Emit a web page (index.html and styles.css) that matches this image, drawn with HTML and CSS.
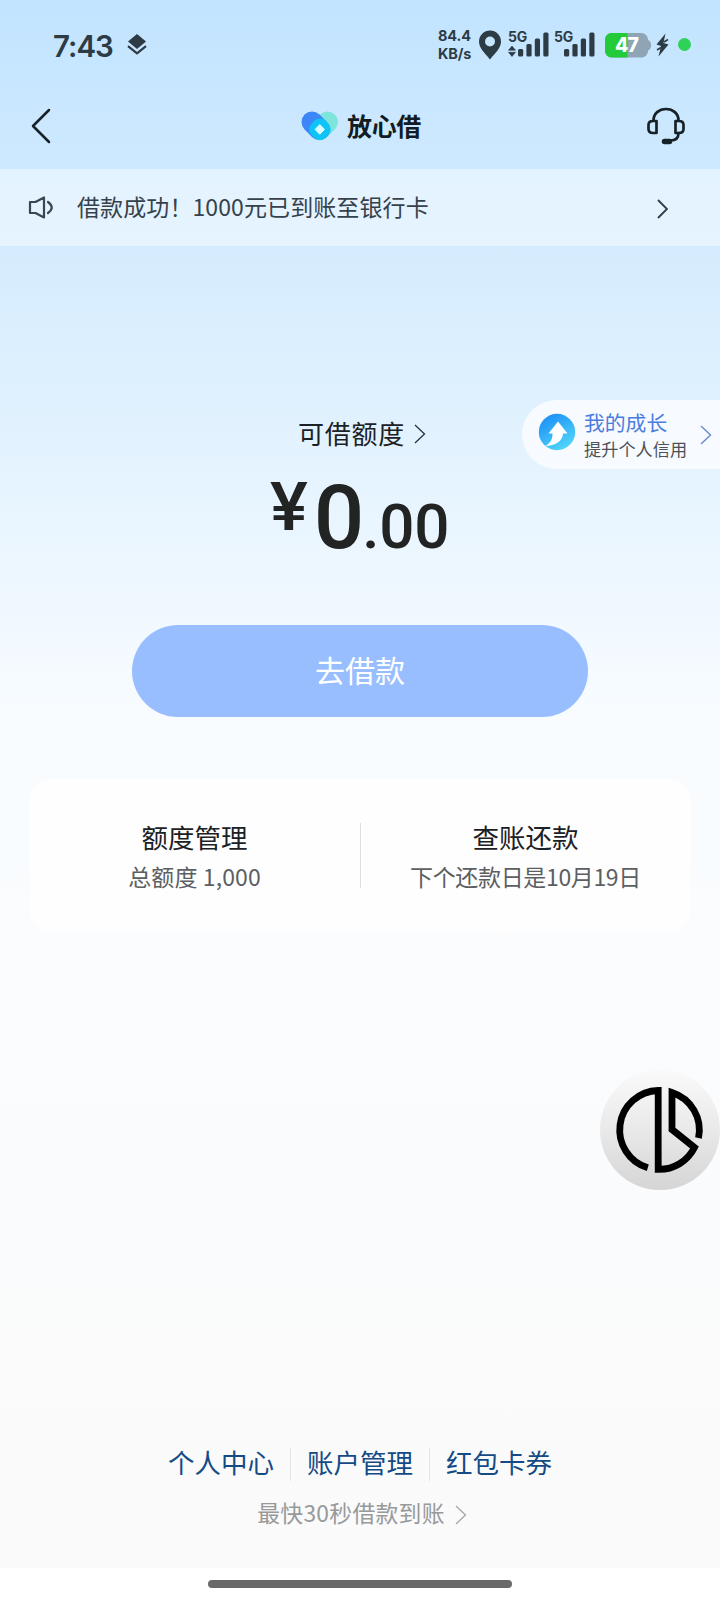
FILE: index.html
```html
<!DOCTYPE html>
<html lang="zh-CN">
<head>
<meta charset="utf-8">
<title>放心借</title>
<link rel="stylesheet" href="styles.css">
</head>
<body>
<div class="page">
  <div class="status">
    <span class="time">7:43</span>
    <svg class="layers" width="20" height="22" viewBox="0 0 20 22"><path d="M10 0 19 7.500 10 15 1 7.500Z" fill="#2d3b45"/><path d="M1 12.200 10 19.300l9-7.100" fill="none" stroke="#2d3b45" stroke-width="2.200"/></svg>
    <div class="speed"><span>84.4</span><span>KB/s</span></div>
    <svg class="pin" width="24" height="30" viewBox="0 0 24 30"><path fill-rule="evenodd" d="M12 .5A11 11 0 0 0 1 11.500C1 18 6 22 12 29.500 18 22 23 18 23 11.500A11 11 0 0 0 12 .5ZM12 6.500a5 5 0 1 1 0 10 5 5 0 0 1 0-10Z" fill="#2d3b45"/></svg>
    <svg class="signal" width="42" height="28" viewBox="0 0 42 28" fill="#2d3b45"><text x="0" y="11" class="net">5G</text><path d="m4 15 3.500 4.200H.5ZM4 25.500l3.500-4.200H.5Z" stroke="#2d3b45" stroke-width=".6" stroke-linejoin="round"/><rect x="10" y="18" width="5.200" height="7.500" rx="1.500"/><rect x="18.400" y="13" width="5.200" height="12.500" rx="1.500"/><rect x="26.800" y="7.500" width="5.200" height="18" rx="1.500"/><rect x="35.300" y="1.500" width="5.200" height="24" rx="1.500"/></svg>
    <svg class="signal second" width="42" height="28" viewBox="0 0 42 28" fill="#2d3b45"><text x="0" y="11" class="net">5G</text><rect x="10" y="18" width="5.200" height="7.500" rx="1.500"/><rect x="18.400" y="13" width="5.200" height="12.500" rx="1.500"/><rect x="26.800" y="7.500" width="5.200" height="18" rx="1.500"/><rect x="35.300" y="1.500" width="5.200" height="24" rx="1.500"/></svg>
    <svg class="battery" width="46" height="25" viewBox="0 0 46 25"><rect width="43" height="24.500" rx="6.500" fill="#8fa4b5"/><path d="M43 7q3 1 3 5.200t-3 5.200Z" fill="#8fa4b5"/><path d="M6.500 0H22.500V24.500H6.500A6.500 6.500 0 0 1 0 18V6.500A6.500 6.500 0 0 1 6.500 0Z" fill="#24cb39"/><text x="21.500" y="19.300" text-anchor="middle" class="charge">47</text></svg>
    <svg class="bolt" width="13" height="24" viewBox="0 0 13 24"><path d="M9.500.5.5 11.500 5 13 2.500 23.500 12.500 11.500 7.500 10Z" fill="#2d3b45"/><path d="m1 17 4-2.500M12 6.500 8 9" stroke="#2d3b45" stroke-width="1.500"/></svg>
    <span class="dot"></span>
  </div>

  <header class="header">
    <svg class="back" width="20" height="36" viewBox="0 0 20 36"><path d="M18 2 2 18 18 34" fill="none" stroke="#182229" stroke-width="2.500" stroke-linecap="round" stroke-linejoin="round"/></svg>
    <div class="brand">
      <svg width="38" height="30" viewBox="0 0 38 30"><g stroke-linecap="round" stroke-width="21" fill="none"><path d="M26.500 11 18.500 18.500" stroke="#7ee5dc"/><path d="M11 11 18.500 18.500" stroke="#3d86f8"/></g><rect x="8.900" y="8.300" width="20" height="20" rx="8" transform="rotate(45 18.900 18.300)" fill="#0ec3f7"/><path d="m18.800 13.500 4.700 4.900-4.700 4.900-4.700-4.900Z" fill="#d9fbff" stroke="#d9fbff" stroke-linejoin="round"/></svg>
      <span>放心借</span>
    </div>
    <svg class="service" width="40" height="38" viewBox="0 0 40 38" fill="none" stroke="#172128" stroke-width="2.700" stroke-linecap="round" stroke-linejoin="round"><path d="M7.500 13.500C7.500 6.500 13 2 20 2s12.500 4.500 12.500 11.500M10.500 14v12H7Q2.500 26 2.500 22v-4Q2.500 14 7 14ZM29.500 14v12H33q4.500 0 4.500-4v-4q0-4-4.500-4Z"/><path d="M32.500 26c0 5-3 7.500-8 7.500"/><path d="M18.500 34.500h5" stroke-width="5.500"/></svg>
  </header>

  <div class="notice">
    <svg width="26" height="24" viewBox="0 0 26 24" fill="none" stroke="#3a4652" stroke-width="2.200" stroke-linecap="round" stroke-linejoin="round"><path d="M2 6H7.500L16 1.500V21.500L7.500 17H2ZM20 6Q27.500 11.500 20 17"/></svg>
    <span class="notice-text">借款成功！1000元已到账至银行卡</span>
    <svg class="notice-more" width="12" height="20" viewBox="0 0 12 20"><path d="m2 1 9 9-9 9" fill="none" stroke="#333d45" stroke-width="1.900"/></svg>
  </div>

  <main class="main">
    <div class="growth">
      <svg width="38" height="38" viewBox="0 0 38 38"><defs><linearGradient id="growth-blue" x1="0" y1="0" x2=".6" y2="1"><stop stop-color="#1687f5"/><stop offset="1" stop-color="#4fd3fa"/></linearGradient></defs><circle cx="19" cy="19" r="18.200" fill="url(#growth-blue)"/><path d="M20 8.500 29.500 20.500H25C25 28 17 33 7.500 33 13 29.500 14.500 26 14.500 20.500H10.500Z" fill="#fff"/></svg>
      <div class="growth-copy"><b>我的成长</b><span>提升个人信用</span></div>
      <svg class="growth-more" width="12" height="20" viewBox="0 0 12 20"><path d="m1 1 9.500 9L1 19" fill="none" stroke="#6e8ed0" stroke-width="1.500"/></svg>
    </div>
    <div class="quota"><span>可借额度</span><svg width="12" height="20" viewBox="0 0 12 20"><path d="m1 1 9.500 9L1 19" fill="none" stroke="#26343d" stroke-width="1.300"/></svg></div>
    <div class="amount"><span class="yen">¥</span><span class="whole">0</span><span class="cents">.00</span></div>
    <button class="borrow">去借款</button>
    <section class="card">
      <div class="cell"><b>额度管理</b><span>总额度 1,000</span></div>
      <div class="cell"><b>查账还款</b><span class="due">下个还款日是10月19日</span></div>
    </section>
  </main>

  <svg class="float" width="120" height="120" viewBox="0 0 120 120"><defs><linearGradient id="ball" x1="0" y1="0" x2="0" y2="1"><stop stop-color="#fafafa"/><stop offset=".5" stop-color="#e9e9ea"/><stop offset="1" stop-color="#d5d5d6"/></linearGradient></defs><circle cx="60" cy="60" r="60" fill="url(#ball)"/><g fill="none" stroke="#000" stroke-width="6.800"><path d="M47.800 97.800A39.500 39.500 0 0 1 58.200 20.500V99.400A39.500 39.500 0 0 0 94.500 77.500L72 59.500V22.400A39.500 39.500 0 0 1 98.500 68"/></g></svg>

  <footer class="footer">
    <nav class="links"><a>个人中心</a><a>账户管理</a><a>红包卡券</a></nav>
    <div class="tip"><span>最快30秒借款到账</span><svg width="12" height="20" viewBox="0 0 12 20"><path d="m1 1 9.500 9L1 19" fill="none" stroke="#a5a8aa" stroke-width="1.300"/></svg></div>
  </footer>
  <div class="gesture"><span></span></div>
</div>
</body>
</html>
```
FILE: styles.css
```css
* { box-sizing: border-box; }
body { margin: 0; font-family: "Noto Sans CJK SC", sans-serif; color: #1b2125; }
svg { display: block; flex: none; }
b { font-weight: 400; }
.page {
  position: relative; display: flex; flex-direction: column; width: 720px; height: 1600px; overflow: hidden; white-space: nowrap;
  background: linear-gradient(#c2e4ff 0, #cee9ff 165px, #d5ecfe 246px, #dff1fe 400px, #edf7ff 570px, #f8fcff 720px, #fafcfe 940px, #fafafa 1568px);
}
.status { display: flex; height: 88px; padding-left: 53px; align-items: flex-start; color: #2d3b45; }
.time { width: 61px; margin-top: 28px; font: 600 29.5px/36px Inter, sans-serif; letter-spacing: -1px; }
.layers { margin: 34px 0 0 13px; }
.speed { display: flex; flex-direction: column; width: 34px; margin: 27px 0 0 291px; font: 700 14.5px/17.5px Inter, sans-serif; letter-spacing: -.1px; }
.pin { margin: 30px 0 0 6px; }
.signal { margin: 31px 0 0 6px; overflow: visible; }
.second { margin-left: 4px; }
.net { font: 700 14px Inter, sans-serif; letter-spacing: -.2px; }
.battery { margin: 33px 0 0 9px; }
.charge { font: 800 19.5px Inter, sans-serif; letter-spacing: -1px; fill: #fff; }
.bolt { margin: 33px 0 0 5px; }
.dot { width: 13px; height: 13px; margin: 38px 0 0 9px; border-radius: 50%; background: #30d158; }

.header { display: flex; height: 81px; padding: 0 34px 5px 31px; align-items: center; justify-content: space-between; }
.brand { display: flex; align-items: center; gap: 8px; margin-left: 25px; font-size: 25px; line-height: 34px; font-weight: 700; color: #111c24; }
.brand span { margin-top: -3px; letter-spacing: -.3px; }

.notice { display: flex; height: 77px; padding: 0 52px 0 28px; align-items: center; background: rgba(255,255,255,.42); color: #36424b; }
.notice-text { flex: 1; margin: -3px 0 0 23px; font-size: 23px; line-height: 34px; letter-spacing: .1px; }
.notice-more { margin-top: 2px; }

.main { position: relative; display: flex; flex-direction: column; align-items: center; padding-top: 168px; }
.growth { position: absolute; right: 0; top: 154px; display: flex; width: 198px; height: 69px; padding: 11px 8px 0 16px; align-items: flex-start; border-radius: 35px 0 0 35px; background: rgba(250,252,255,.86); }
.growth svg:first-child { margin-top: 2px; }
.growth-copy { display: flex; flex: 1; flex-direction: column; margin-left: 8px; }
.growth-copy b { font-size: 20.8px; line-height: 22px; color: #4b7ddf; }
.growth-copy span { margin-top: 3px; font-size: 17.2px; line-height: 25px; color: #4c5157; }
.growth-more { margin-top: 14px; }
.quota { display: flex; align-items: center; gap: 9px; height: 38px; margin-left: 4px; font-size: 26px; letter-spacing: .7px; }
.quota span { margin-top: -2px; }
.quota svg { margin-top: 2px; }
.amount { display: flex; align-items: baseline; height: 110px; margin: 11px 0 0 -1px; color: #222323; font-family: Roboto, sans-serif; font-weight: 500; line-height: 110px; }
.yen { width: 38px; transform: translateY(-18px) scaleX(1.08); transform-origin: left; font-size: 66px; }
.whole { margin-left: 6px; font-size: 89px; }
.cents { margin-left: -2px; font-size: 62px; letter-spacing: -.2px; }
.borrow { width: 456px; height: 92px; margin-top: 52px; padding: 0 0 4px; border: 0; border-radius: 46px; background: #99beff; color: #fff; font: 400 30px/44px "Noto Sans CJK SC", sans-serif; }
.card { display: flex; width: 662px; height: 153px; margin-top: 62px; border-radius: 22px; background: #fefefe; }
.cell { position: relative; display: flex; flex: 1; flex-direction: column; align-items: center; padding-top: 38px; }
.cell + .cell::before { content: ""; position: absolute; left: 0; top: 44px; width: 1px; height: 65px; background: #dedfe0; }
.cell b { font-size: 26.500px; line-height: 40px; }
.cell span { font-size: 23px; line-height: 38px; letter-spacing: .1px; color: #5c5f62; }
.cell .due { letter-spacing: -.35px; }

.float { position: absolute; right: 0; top: 1070px; }
.footer { display: flex; flex-direction: column; align-items: center; margin-top: auto; padding-bottom: 38px; }
.links { display: flex; }
.links a { padding: 0 16px 5px; font-size: 26.500px; line-height: 28px; color: #154b85; }
.links a + a { border-left: 1px solid #e3e5e6; }
.tip { display: flex; align-items: center; gap: 10px; margin: 15px 0 0 4px; font-size: 22.800px; line-height: 34px; letter-spacing: .3px; color: #97999b; }
.tip svg { margin-top: 3px; }
.gesture { height: 32px; padding-top: 12px; background: #fff; }
.gesture span { display: block; width: 304px; height: 8px; margin: 0 auto; border-radius: 4px; background: #696969; }
```
